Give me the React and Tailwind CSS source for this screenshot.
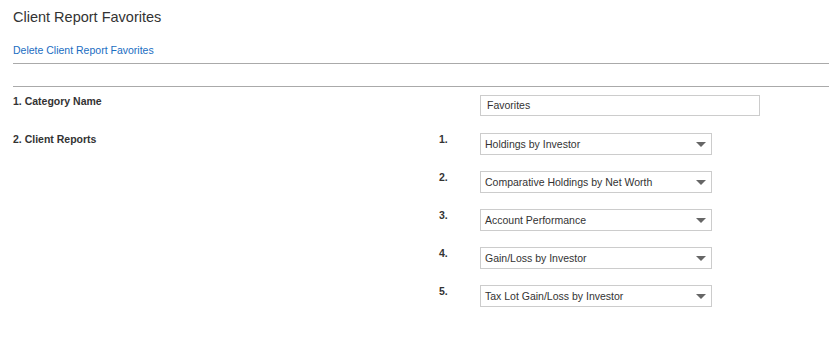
const reports = [
  'Holdings by Investor',
  'Comparative Holdings by Net Worth',
  'Account Performance',
  'Gain/Loss by Investor',
  'Tax Lot Gain/Loss by Investor',
]

function Select({ value }) {
  return (
    <div className="flex h-[22px] w-[232px] items-center justify-between border border-[#cccccc] bg-white pl-[4px] pr-[5px]">
      <span className="text-[10.5px] leading-none text-[#333]">{value}</span>
      <svg width="10" height="5" viewBox="0 0 10 5">
        <path d="M0 0H10L5 5Z" fill="#666" />
      </svg>
    </div>
  )
}

export default function App() {
  return (
    <div className="min-h-[341px] bg-white pl-[13px] font-['Liberation_Sans',Arial,sans-serif] text-[#333]">
      <h1 className="pt-[8px] text-[14.5px] leading-[18px] font-normal">Client Report Favorites</h1>
      <a href="#" className="mt-[18px] block w-fit text-[10.5px] leading-[13px] text-[#1a6dc2]">
        Delete Client Report Favorites
      </a>
      <div className="mt-[6px] border-t border-[#aaaaaa]" />
      <div className="mt-[22px] border-t border-[#aaaaaa]" />

      <div className="mt-[8px] flex">
        <div className="w-[426px] text-[10.5px] leading-[13px] font-bold">1. Category Name</div>
        <div className="ml-[41px] flex h-[21px] w-[280px] items-center border border-[#cccccc] px-[6px] text-[10.5px]">
          Favorites
        </div>
      </div>

      <div className="mt-[17px] flex">
        <div className="w-[426px] text-[10.5px] leading-[13px] font-bold">2. Client Reports</div>
        <div className="flex flex-col gap-[16px]">
          {reports.map((r, i) => (
            <div key={r} className="flex">
              <div className="w-[41px] text-[10.5px] leading-[13px] font-bold">{i + 1}.</div>
              <Select value={r} />
            </div>
          ))}
        </div>
      </div>
    </div>
  )
}
